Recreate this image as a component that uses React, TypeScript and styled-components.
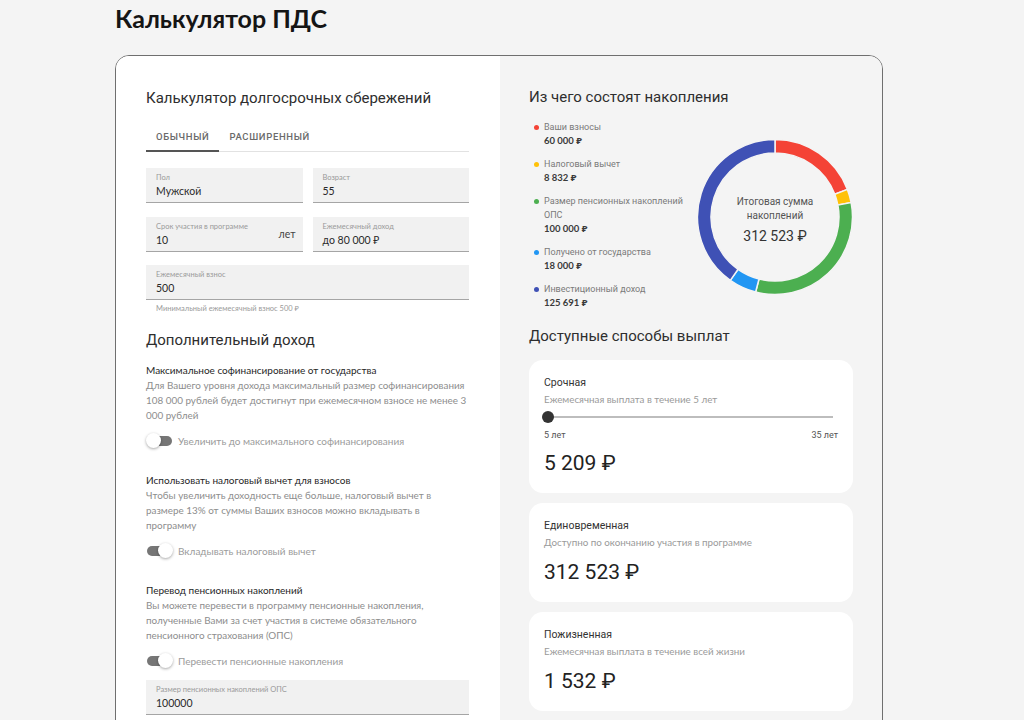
import styled, { createGlobalStyle } from 'styled-components'

const GlobalStyle = createGlobalStyle`
  html, body {
    margin: 0;
    padding: 0;
    background: #f4f4f4;
    overflow: hidden;
  }
  * {
    box-sizing: border-box;
  }
`

const Page = styled.div`
  padding: 3px 0 0 115px;
  font-family: Lato, 'Noto Sans', sans-serif;
  color: #333;
`

const PageTitle = styled.h1`
  margin: 0;
  font-family: Lato, sans-serif;
  font-size: 25px;
  line-height: 30px;
  font-weight: 700;
  color: #151515;
`

const Card = styled.div`
  margin-top: 22px;
  width: 768px;
  border: 1px solid #6f6f6f;
  border-radius: 14px;
  display: grid;
  grid-template-columns: 384px 1fr;
  overflow: hidden;
  min-height: 700px;
`

const LeftPanel = styled.div`
  background: #fff;
  padding: 32px 31px 30px 30px;
`

const RightPanel = styled.div`
  background: #f4f4f4;
  padding: 31px 29px 30px 29px;
`

const Heading = styled.h2<{ $top?: number }>`
  margin: ${(p) => p.$top ?? 0}px 0 0;
  font-family: Roboto, sans-serif;
  font-weight: 400;
  font-size: 15px;
  line-height: 20px;
  color: #2e2e2e;
`

const Tabs = styled.div`
  margin-top: 12px;
  display: flex;
  border-bottom: 1px solid #e2e2e2;
`

const Tab = styled.div<{ $active?: boolean }>`
  padding: 11px 10px 7px;
  font-family: Roboto, sans-serif;
  font-size: 9.5px;
  line-height: 12px;
  font-weight: 500;
  letter-spacing: 0.65px;
  color: #6a6a6a;
  border-bottom: 2px solid ${(p) => (p.$active ? '#555' : 'transparent')};
  margin-bottom: -1px;
`

const FieldGrid = styled.div`
  margin-top: 16px;
  display: grid;
  grid-template-columns: 1fr 1fr;
  column-gap: 10px;
  row-gap: 13.5px;
`

const Field = styled.div<{ $wide?: boolean; $top?: number }>`
  grid-column: ${(p) => (p.$wide ? '1 / 3' : 'auto')};
  margin-top: ${(p) => p.$top ?? 0}px;
  position: relative;
  height: 35px;
  background: #f1f1f1;
  border-bottom: 1px solid #a5a5a5;
  padding: 5px 10px 0;
`

const FieldLabel = styled.div`
  font-size: 7.5px;
  line-height: 9px;
  color: #9a9a9a;
`

const FieldValue = styled.div`
  margin-top: 2px;
  font-size: 10.5px;
  line-height: 14px;
  color: #2a2a2a;
`

const Suffix = styled.span`
  position: absolute;
  right: 7px;
  top: 11px;
  font-size: 10.5px;
  color: #444;
`

const Helper = styled.div`
  margin-top: 4px;
  padding-left: 10px;
  font-size: 7.5px;
  line-height: 10px;
  color: #9a9a9a;
`

const Section = styled.div<{ $top: number }>`
  margin-top: ${(p) => p.$top}px;
`

const SectionTitle = styled.div`
  font-size: 10px;
  line-height: 15px;
  color: #262626;
`

const SectionText = styled.div`
  font-size: 9.9px;
  line-height: 15px;
  color: #8d8d8d;
`

const ToggleRow = styled.div`
  margin-top: 8px;
  height: 20px;
  display: flex;
  align-items: center;
  gap: 6px;
`

const Track = styled.div`
  position: relative;
  width: 25px;
  height: 10px;
  margin-left: 1px;
  border-radius: 5px;
  background: #767676;
`

const Thumb = styled.div<{ $on?: boolean }>`
  position: absolute;
  top: -3px;
  left: ${(p) => (p.$on ? '11px' : '-1px')};
  width: 15px;
  height: 15px;
  border-radius: 50%;
  background: #fff;
  box-shadow: 0 1px 3px rgba(0, 0, 0, 0.35);
`

const ToggleLabel = styled.span`
  font-size: 10px;
  color: #9b9b9b;
`

const Composition = styled.div`
  margin-top: 13px;
  display: flex;
  align-items: flex-start;
  justify-content: space-between;
`

const Legend = styled.div`
  display: flex;
  flex-direction: column;
  gap: 9px;
  width: 160px;
`

const LegendItem = styled.div`
  display: grid;
  grid-template-columns: 8px 1fr;
  column-gap: 7px;
`

const Dot = styled.span<{ $color: string }>`
  width: 5px;
  height: 5px;
  margin: 5px 0 0 5px;
  border-radius: 50%;
  background: ${(p) => p.$color};
`

const LegendLabel = styled.div`
  font-family: Roboto, sans-serif;
  font-size: 9px;
  line-height: 14px;
  color: #7a7a7a;
`

const LegendValue = styled.div`
  grid-column: 2;
  font-size: 9.5px;
  line-height: 14px;
  font-weight: 700;
  color: #3a3a3a;
`

const Donut = styled.div`
  position: relative;
  margin-top: 19px;
  width: 156px;
  height: 156px;
`

const DonutCenter = styled.div`
  position: absolute;
  inset: 0;
  display: flex;
  flex-direction: column;
  align-items: center;
  justify-content: center;
  font-family: Roboto, sans-serif;
  text-align: center;
  padding-top: 6px;
`

const DonutLabel = styled.div`
  font-size: 10px;
  line-height: 14px;
  color: #555;
`

const DonutValue = styled.div`
  margin-top: 4px;
  font-size: 14px;
  line-height: 18px;
  color: #333;
`

const Payouts = styled.div`
  margin-top: 14px;
  display: flex;
  flex-direction: column;
  gap: 10px;
`

const PayCard = styled.div`
  background: #fff;
  border-radius: 14px;
  padding: 16px 15px 17px;
`

const PayTitle = styled.div`
  font-family: Roboto, sans-serif;
  font-size: 10.5px;
  line-height: 14px;
  color: #333;
`

const PaySub = styled.div`
  margin-top: 2px;
  font-size: 9.8px;
  line-height: 14px;
  color: #9a9a9a;
`

const PayAmount = styled.div<{ $top?: number }>`
  margin-top: ${(p) => p.$top ?? 10}px;
  font-family: Roboto, sans-serif;
  font-size: 21px;
  line-height: 26px;
  color: #222;
`

const Slider = styled.div`
  position: relative;
  margin: 5px 5px 0 4px;
  height: 12px;
  display: flex;
  align-items: center;
`

const SliderTrack = styled.div`
  width: 100%;
  height: 2px;
  background: #bdbdbd;
`

const SliderThumb = styled.div`
  position: absolute;
  left: -6px;
  top: 0;
  width: 12px;
  height: 12px;
  border-radius: 50%;
  background: #333;
`

const SliderScale = styled.div`
  margin-top: 6px;
  display: flex;
  justify-content: space-between;
  font-family: Roboto, sans-serif;
  font-size: 9px;
  line-height: 12px;
  color: #555;
`

const parts = [
  { label: 'Ваши взносы', value: 60000, color: '#f44336' },
  { label: 'Налоговый вычет', value: 8832, color: '#ffc107' },
  { label: 'Размер пенсионных накоплений ОПС', value: 100000, color: '#4caf50' },
  { label: 'Получено от государства', value: 18000, color: '#2196f3' },
  { label: 'Инвестиционный доход', value: 125691, color: '#3f51b5' },
]

const fmt = (n: number) => n.toLocaleString('ru-RU').replace(/\s/g, ' ') + ' ₽'

const sector = (a0: number, a1: number) => {
  const c = 78
  const ro = 77.5
  const ri = 64
  const pt = (r: number, a: number) => `${c + r * Math.sin(a)} ${c - r * Math.cos(a)}`
  const large = a1 - a0 > Math.PI ? 1 : 0
  return `M ${pt(ro, a0)} A ${ro} ${ro} 0 ${large} 1 ${pt(ro, a1)} L ${pt(ri, a1)} A ${ri} ${ri} 0 ${large} 0 ${pt(ri, a0)} Z`
}

const DonutChart = () => {
  const total = parts.reduce((s, p) => s + p.value, 0)
  let acc = 0
  return (
    <Donut>
      <svg width="156" height="156" viewBox="0 0 156 156">
        {parts.map((p) => {
          const a0 = (acc / total) * Math.PI * 2
          acc += p.value
          const a1 = (acc / total) * Math.PI * 2
          return <path key={p.label} d={sector(a0, a1)} fill={p.color} stroke="#f4f4f4" strokeWidth="1.5" />
        })}
      </svg>
      <DonutCenter>
        <DonutLabel>
          Итоговая сумма
          <br />
          накоплений
        </DonutLabel>
        <DonutValue>{fmt(total)}</DonutValue>
      </DonutCenter>
    </Donut>
  )
}

const Toggle = ({ on, label }: { on?: boolean; label: string }) => (
  <ToggleRow>
    <Track>
      <Thumb $on={on} />
    </Track>
    <ToggleLabel>{label}</ToggleLabel>
  </ToggleRow>
)

const App = () => {
  return (
    <Page>
      <GlobalStyle />
      <PageTitle>Калькулятор ПДС</PageTitle>
      <Card>
        <LeftPanel>
          <Heading>Калькулятор долгосрочных сбережений</Heading>
          <Tabs>
            <Tab $active>ОБЫЧНЫЙ</Tab>
            <Tab>РАСШИРЕННЫЙ</Tab>
          </Tabs>

          <FieldGrid>
            <Field>
              <FieldLabel>Пол</FieldLabel>
              <FieldValue>Мужской</FieldValue>
            </Field>
            <Field>
              <FieldLabel>Возраст</FieldLabel>
              <FieldValue>55</FieldValue>
            </Field>
            <Field>
              <FieldLabel>Срок участия в программе</FieldLabel>
              <FieldValue>10</FieldValue>
              <Suffix>лет</Suffix>
            </Field>
            <Field>
              <FieldLabel>Ежемесячный доход</FieldLabel>
              <FieldValue>до 80 000 ₽</FieldValue>
            </Field>
            <Field $wide>
              <FieldLabel>Ежемесячный взнос</FieldLabel>
              <FieldValue>500</FieldValue>
            </Field>
          </FieldGrid>
          <Helper>Минимальный ежемесячный взнос 500 ₽</Helper>

          <Heading $top={16}>Дополнительный доход</Heading>

          <Section $top={13}>
            <SectionTitle>Максимальное софинансирование от государства</SectionTitle>
            <SectionText>
              Для Вашего уровня дохода максимальный размер софинансирования 108 000 рублей будет
              достигнут при ежемесячном взносе не менее 3 000 рублей
            </SectionText>
            <Toggle label="Увеличить до максимального софинансирования" />
          </Section>

          <Section $top={22}>
            <SectionTitle>Использовать налоговый вычет для взносов</SectionTitle>
            <SectionText>
              Чтобы увеличить доходность еще больше, налоговый вычет в размере 13% от суммы Ваших
              взносов можно вкладывать в программу
            </SectionText>
            <Toggle on label="Вкладывать налоговый вычет" />
          </Section>

          <Section $top={22}>
            <SectionTitle>Перевод пенсионных накоплений</SectionTitle>
            <SectionText>
              Вы можете перевести в программу пенсионные накопления, полученные Вами за счет участия
              в системе обязательного пенсионного страхования (ОПС)
            </SectionText>
            <Toggle on label="Перевести пенсионные накопления" />
          </Section>

          <Field $top={9}>
            <FieldLabel>Размер пенсионных накоплений ОПС</FieldLabel>
            <FieldValue>100000</FieldValue>
          </Field>
        </LeftPanel>

        <RightPanel>
          <Heading>Из чего состоят накопления</Heading>
          <Composition>
            <Legend>
              {parts.map((p) => (
                <LegendItem key={p.label}>
                  <Dot $color={p.color} />
                  <LegendLabel>{p.label}</LegendLabel>
                  <LegendValue>{fmt(p.value)}</LegendValue>
                </LegendItem>
              ))}
            </Legend>
            <DonutChart />
          </Composition>

          <Heading $top={16}>Доступные способы выплат</Heading>
          <Payouts>
            <PayCard>
              <PayTitle>Срочная</PayTitle>
              <PaySub>Ежемесячная выплата в течение 5 лет</PaySub>
              <Slider>
                <SliderTrack />
                <SliderThumb />
              </Slider>
              <SliderScale>
                <span>5 лет</span>
                <span>35 лет</span>
              </SliderScale>
              <PayAmount $top={9}>5 209 ₽</PayAmount>
            </PayCard>
            <PayCard>
              <PayTitle>Единовременная</PayTitle>
              <PaySub>Доступно по окончанию участия в программе</PaySub>
              <PayAmount>312 523 ₽</PayAmount>
            </PayCard>
            <PayCard>
              <PayTitle>Пожизненная</PayTitle>
              <PaySub>Ежемесячная выплата в течение всей жизни</PaySub>
              <PayAmount>1 532 ₽</PayAmount>
            </PayCard>
          </Payouts>
        </RightPanel>
      </Card>
    </Page>
  )
}

export default App
